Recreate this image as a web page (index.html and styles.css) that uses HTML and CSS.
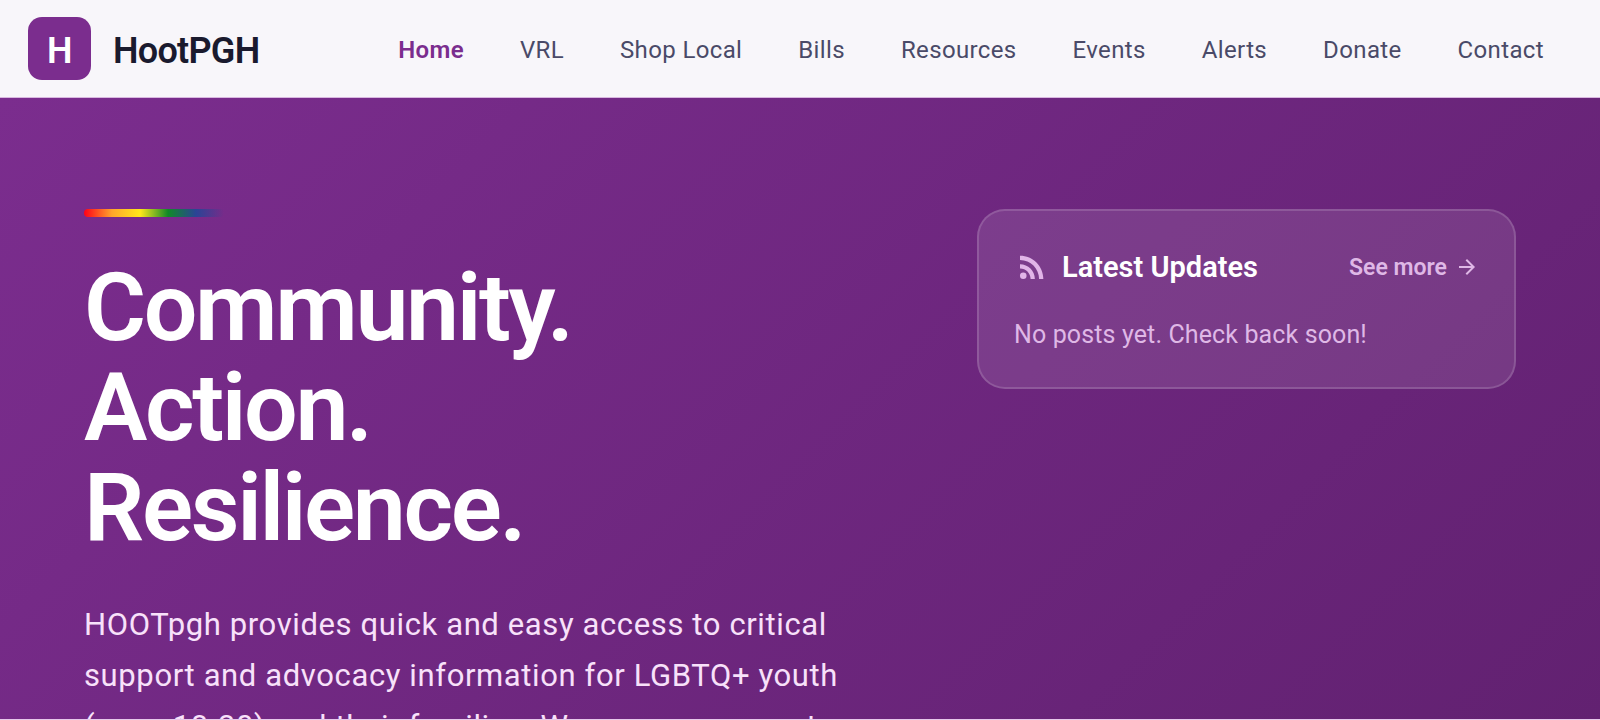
FILE: index.html
```html
<!DOCTYPE html>
<html lang="en">
<head>
    <meta charset="UTF-8">
    <meta name="viewport" content="width=device-width, initial-scale=1.0">
    <title>HootPGH</title>
    <link rel="stylesheet" href="styles.css">
</head>
<body>

    <header class="site-header">
        <a class="brand" href="#">
            <span class="brand-mark">H</span>
            <span class="brand-name">HootPGH</span>
        </a>
        <nav class="main-nav">
            <a class="active" href="#">Home</a>
            <a href="#">VRL</a>
            <a href="#">Shop Local</a>
            <a href="#">Bills</a>
            <a href="#">Resources</a>
            <a href="#">Events</a>
            <a href="#">Alerts</a>
            <a href="#">Donate</a>
            <a href="#">Contact</a>
        </nav>
    </header>

    <main class="hero">
        <section class="intro">
            <div class="rainbow"></div>
            <h1>Community.<br>Action.<br>Resilience.</h1>
            <p>HOOTpgh provides quick and easy access to critical support and advocacy information for LGBTQ+ youth (ages 18-30) and their families. We are a resource to our community.</p>
        </section>

        <aside class="updates">
            <div class="updates-head">
                <svg class="rss" viewBox="0 0 24 24" aria-hidden="true">
                    <circle cx="6.18" cy="17.82" r="2.18"/>
                    <path d="M4 4.44v2.83c7.03 0 12.73 5.7 12.73 12.73h2.83c0-8.59-6.97-15.56-15.56-15.56zm0 5.66v2.83c3.9 0 7.07 3.17 7.07 7.07h2.83c0-5.47-4.43-9.9-9.9-9.9z"/>
                </svg>
                <h2>Latest Updates</h2>
                <a class="see-more" href="#">
                    See more
                    <svg viewBox="0 0 24 24" aria-hidden="true">
                        <path d="M12 4l-1.41 1.41L16.17 11H4v2h12.17l-5.58 5.59L12 20l8-8z"/>
                    </svg>
                </a>
            </div>
            <p>No posts yet. Check back soon!</p>
        </aside>
    </main>

</body>
</html>
```
FILE: styles.css
```css
* {
    box-sizing: border-box;
}

body {
    margin: 0;
    height: 100vh;
    display: flex;
    flex-direction: column;
    overflow: hidden;
    border-bottom: 1px solid #e6c8ea;
    font-family: Roboto, sans-serif;
    background-color: #f8f6fa;
}

a {
    color: inherit;
    text-decoration: none;
}

h1, h2, p {
    margin: 0;
}

/* Header */
.site-header {
    display: flex;
    justify-content: space-between;
    align-items: center;
    flex-shrink: 0;
    height: 98px;
    padding: 0 56px 0 28px;
    border-bottom: 1px solid #d9b8e0;
}

.brand {
    display: flex;
    align-items: center;
    gap: 22px;
    color: #1a1a2e;
    font-size: 36px;
    font-weight: 600;
    letter-spacing: -0.02em;
}

.brand-name {
    padding-top: 4px;
}

.brand-mark {
    display: flex;
    align-items: center;
    justify-content: center;
    width: 63px;
    height: 63px;
    padding-top: 4px;
    border-radius: 14px;
    background-color: #7b2d8e;
    color: white;
}

.main-nav {
    display: flex;
    gap: 56px;
    padding-top: 3px;
    color: #4a4a68;
    font-size: 24px;
    letter-spacing: 0.015em;
}

.main-nav .active {
    color: #7b2d8e;
    font-weight: 600;
}

/* Hero */
.hero {
    display: flex;
    justify-content: space-between;
    align-items: flex-start;
    gap: 84px;
    flex: 1;
    min-height: 0;
    padding: 111px 84px 0;
    overflow: hidden;
    background: linear-gradient(135deg, #7b2d8e, #622171);
}

.intro {
    flex: 1;
    max-width: 770px;
}

.rainbow {
    width: 140px;
    height: 8px;
    border-radius: 4px;
    background: linear-gradient(90deg, #ff0018, #ffa52c, #ffe81a, #108a28, #2a4496, transparent);
}

.intro h1 {
    margin-top: 41px;
    color: white;
    font-size: 95px;
    font-weight: 600;
    line-height: 100px;
    letter-spacing: -0.025em;
}

.intro p {
    margin-top: 41px;
    color: #f8e1fa;
    font-size: 31px;
    line-height: 51px;
    letter-spacing: 0.02em;
}

/* Latest updates card */
.updates {
    flex: 0 0 539px;
    padding: 38px 35px 34px;
    border: 2px solid rgba(255, 255, 255, 0.15);
    border-radius: 28px;
    background-color: rgba(255, 255, 255, 0.1);
    color: #dfb8e6;
}

.updates-head {
    display: flex;
    align-items: center;
}

.rss {
    width: 36px;
    height: 36px;
    fill: #e1b5e8;
}

.updates h2 {
    margin-left: 12px;
    color: white;
    font-size: 29px;
    font-weight: 600;
}

.see-more {
    display: flex;
    align-items: center;
    gap: 8px;
    margin-left: auto;
    font-size: 23px;
    font-weight: 600;
}

.see-more svg {
    width: 24px;
    height: 24px;
    fill: currentColor;
}

.updates p {
    margin-top: 32px;
    font-size: 25px;
    line-height: 36px;
    letter-spacing: 0.005em;
}
```
